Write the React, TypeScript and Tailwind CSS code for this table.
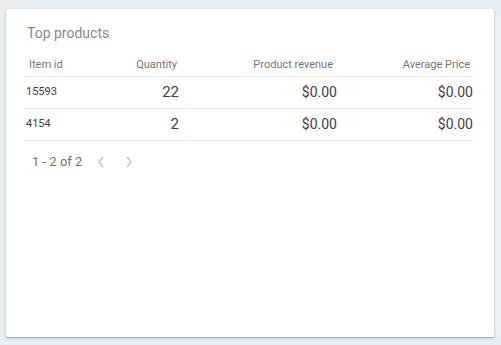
import React from 'react';

const rows = [
  { id: '15593', qty: '22', revenue: '$0.00', avg: '$0.00' },
  { id: '4154', qty: '2', revenue: '$0.00', avg: '$0.00' }];

export default function App() {
  return (
    <div className="w-[501px] h-[345px] bg-[#eceff1] pt-[9px] pl-[6px] font-['Roboto',sans-serif]">
      <div className="w-[488px] h-[328px] bg-white rounded-[2px] shadow-[0_1px_3px_rgba(0,0,0,0.25),0_1px_1px_rgba(0,0,0,0.12)] px-[18px] pt-[14px]">
        {/* Title */}
        <h2 className="pl-[3px] text-[14px] leading-[20px] text-[#888888]">Top products</h2>

        {/* Table */}
        <div className="mt-[12px] w-[448px]">
          <div className="grid grid-cols-[76px_79px_158px_135px] h-[22px] items-center text-[11px] text-[#757575] border-b border-[#ebebeb]">
            <div className="pl-[5px]">Item id</div>
            <div className="text-right pr-[2px]">Quantity</div>
            <div className="text-right pr-[4px]">Product revenue</div>
            <div className="text-right pr-[2px]">Average Price</div>
          </div>
          {rows.map((row) =>
          <div
            key={row.id}
            className="grid grid-cols-[76px_79px_158px_135px] h-[32px] items-center border-b border-[#ebebeb] text-[#424242]">

              <div className="pl-[2px] text-[11px]">{row.id}</div>
              <div className="text-right text-[15px]">{row.qty}</div>
              <div className="text-right text-[14px]">{row.revenue}</div>
              <div className="text-right text-[14px] -mr-[1px]">{row.avg}</div>
            </div>
          )}
        </div>

        {/* Pagination */}
        <div className="flex items-center h-[42px] pl-[8px] text-[13px] text-[#757575]">
          <span>1 - 2 of 2</span>
          <svg className="ml-[14px]" width="10" height="14" viewBox="0 0 10 14" fill="none" stroke="#c4c4c4" strokeWidth="1.4">
            <path d="M7 2 L3 7 L7 12" />
          </svg>
          <svg className="ml-[18px]" width="10" height="14" viewBox="0 0 10 14" fill="none" stroke="#c4c4c4" strokeWidth="1.4">
            <path d="M3 2 L7 7 L3 12" />
          </svg>
        </div>
      </div>
    </div>);

}
